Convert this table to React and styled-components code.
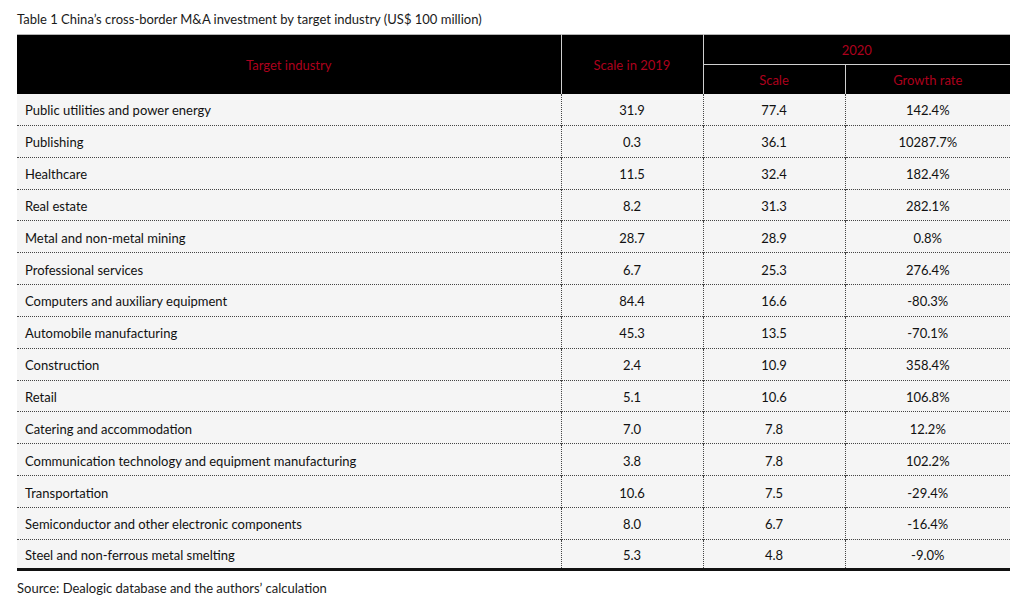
import React from "react";
import styled, { createGlobalStyle } from "styled-components";

const Global = createGlobalStyle`
  html, body { margin: 0; padding: 0; background: #fff; }
  body { font-family: Lato, "Noto Sans", sans-serif; color: #111; }
`;

const Page = styled.div`
  width: 1033px;
  height: 612px;
  box-sizing: border-box;
  padding: 10px 23px 0 17px;
  display: flex;
  flex-direction: column;
`;

const Caption = styled.div`
  font-size: 13px;
  line-height: 18px;
  height: 24px;
  color: #1a1a1a;
`;

const Table = styled.table`
  width: 993px;
  border-collapse: collapse;
  table-layout: fixed;
  border-top: 1px solid #b5b5b5;
`;

const HeadCell = styled.th`
  background: #000;
  color: #ad001d;
  font-weight: 400;
  font-size: 13px;
  height: ${(p) => p.$h}px;
  padding: 0;
  text-align: center;
  vertical-align: middle;
  border-left: ${(p) => (p.$first ? "none" : "1px solid #cfcfcf")};
  border-bottom: ${(p) => (p.$sub ? "1px solid #cfcfcf" : "none")};
`;

const Row = styled.tr`
  background: #f5f5f5;
  border-bottom: ${(p) => (p.$last ? "3px solid #111" : "1px dotted #444")};
`;

const Cell = styled.td`
  height: ${(p) => (p.$last ? 26.5 : 28.85)}px;
  padding: 2px 0 0 ${(p) => (p.$left ? 8 : 0)}px;
  font-size: 13px;
  color: #111;
  text-align: ${(p) => (p.$left ? "left" : "center")};
  vertical-align: middle;
  border-left: ${(p) => (p.$left ? "none" : "1px dotted #444")};
  white-space: nowrap;
`;

const Source = styled.div`
  font-size: 13px;
  color: #1a1a1a;
  margin-top: 9px;
`;

const rows = [
  ["Public utilities and power energy", "31.9", "77.4", "142.4%"],
  ["Publishing", "0.3", "36.1", "10287.7%"],
  ["Healthcare", "11.5", "32.4", "182.4%"],
  ["Real estate", "8.2", "31.3", "282.1%"],
  ["Metal and non-metal mining", "28.7", "28.9", "0.8%"],
  ["Professional services", "6.7", "25.3", "276.4%"],
  ["Computers and auxiliary equipment", "84.4", "16.6", "-80.3%"],
  ["Automobile manufacturing", "45.3", "13.5", "-70.1%"],
  ["Construction", "2.4", "10.9", "358.4%"],
  ["Retail", "5.1", "10.6", "106.8%"],
  ["Catering and accommodation", "7.0", "7.8", "12.2%"],
  ["Communication technology and equipment manufacturing", "3.8", "7.8", "102.2%"],
  ["Transportation", "10.6", "7.5", "-29.4%"],
  ["Semiconductor and other electronic components", "8.0", "6.7", "-16.4%"],
  ["Steel and non-ferrous metal smelting", "5.3", "4.8", "-9.0%"],
];

export default function App() {
  return (
    <Page>
      <Global />
      <Caption>Table 1 China’s cross-border M&amp;A investment by target industry (US$ 100 million)</Caption>
      <Table>
        <colgroup>
          <col style={{ width: 544 }} />
          <col style={{ width: 142 }} />
          <col style={{ width: 142 }} />
          <col style={{ width: 165 }} />
        </colgroup>
        <thead>
          <tr>
            <HeadCell rowSpan={2} $first $h={29}>Target industry</HeadCell>
            <HeadCell rowSpan={2} $h={29}>Scale in 2019</HeadCell>
            <HeadCell colSpan={2} $sub $h={29}>2020</HeadCell>
          </tr>
          <tr>
            <HeadCell $h={29}>Scale</HeadCell>
            <HeadCell $h={29}>Growth rate</HeadCell>
          </tr>
        </thead>
        <tbody>
          {rows.map((r, i) => {
            const last = i === rows.length - 1;
            return (
              <Row key={r[0]} $last={last}>
                <Cell $left $last={last}>{r[0]}</Cell>
                <Cell $last={last}>{r[1]}</Cell>
                <Cell $last={last}>{r[2]}</Cell>
                <Cell $last={last}>{r[3]}</Cell>
              </Row>
            );
          })}
        </tbody>
      </Table>
      <Source>Source: Dealogic database and the authors’ calculation</Source>
    </Page>
  );
}
